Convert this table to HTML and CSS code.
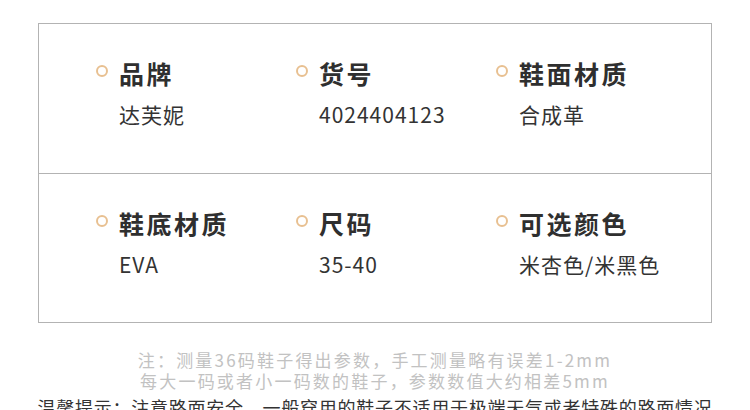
FILE: index.html
```html
<!DOCTYPE html>
<html lang="zh">
<head>
<meta charset="utf-8">
<link rel="stylesheet" href="styles.css">
</head>
<body>
<div class="page">
  <div class="table">
    <div class="row row-top">
      <div class="cell">
        <div class="title"><span class="dot"></span><span>品牌</span></div>
        <div class="value">达芙妮</div>
      </div>
      <div class="cell">
        <div class="title"><span class="dot"></span><span>货号</span></div>
        <div class="value">4024404123</div>
      </div>
      <div class="cell">
        <div class="title"><span class="dot"></span><span>鞋面材质</span></div>
        <div class="value">合成革</div>
      </div>
    </div>
    <div class="row row-bottom">
      <div class="cell">
        <div class="title"><span class="dot"></span><span>鞋底材质</span></div>
        <div class="value">EVA</div>
      </div>
      <div class="cell">
        <div class="title"><span class="dot"></span><span>尺码</span></div>
        <div class="value">35-40</div>
      </div>
      <div class="cell">
        <div class="title"><span class="dot"></span><span>可选颜色</span></div>
        <div class="value">米杏色/米黑色</div>
      </div>
    </div>
  </div>
  <div class="notes">
    <p class="note">注：测量36码鞋子得出参数，手工测量略有误差1-2mm</p>
    <p class="note">每大一码或者小一码数的鞋子，参数数值大约相差5mm</p>
  </div>
  <p class="tip">温馨提示：注意路面安全，一般穿用的鞋子不适用于极端天气或者特殊的路面情况</p>
</div>
</body>
</html>
```

FILE: styles.css
```css
html, body {
  margin: 0;
  padding: 0;
  background: #ffffff;
}
body {
  width: 750px;
  height: 410px;
  overflow: hidden;
  font-family: "Noto Sans CJK SC", "Noto Sans", sans-serif;
  color: #333333;
}
.page {
  padding-top: 23px;
}
.table {
  margin-left: 38px;
  width: 672px;
  border: 1px solid #b3b3b3;
}
.row {
  display: flex;
  padding-left: 57px;
  box-sizing: border-box;
}
.row-top {
  height: 150px;
  border-bottom: 1px solid #b3b3b3;
}
.row-bottom {
  height: 148px;
}
.cell {
  width: 200px;
  padding-top: 34px;
  box-sizing: border-box;
}
.title {
  display: flex;
  align-items: center;
  gap: 11px;
  height: 30px;
  font-size: 25px;
  font-weight: 700;
  letter-spacing: 2.5px;
  color: #2f2f2f;
}
.dot {
  width: 8px;
  height: 8px;
  border: 2px solid #e8c091;
  border-radius: 50%;
  flex: none;
  margin-top: -4px;
}
.value {
  margin-top: 13px;
  padding-left: 23px;
  font-size: 21px;
  line-height: 26px;
  letter-spacing: 1px;
  color: #333333;
}
.notes {
  margin-top: 26px;
}
.note {
  margin: 0;
  text-align: center;
  font-size: 17px;
  line-height: 21px;
  letter-spacing: 2.2px;
  color: #c2c2c2;
}
.tip {
  margin: 4px 0 0;
  text-align: center;
  white-space: nowrap;
  font-size: 18px;
  line-height: 24px;
  letter-spacing: 0.75px;
  color: #333333;
}
```
